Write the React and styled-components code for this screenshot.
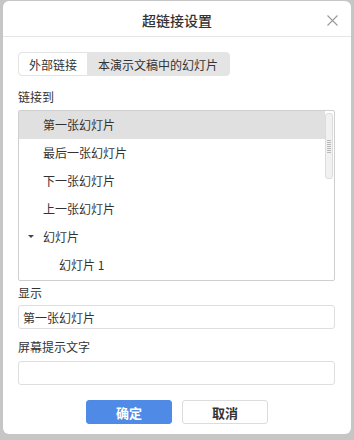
import styled, { createGlobalStyle } from "styled-components"

const GlobalStyle = createGlobalStyle`
  html, body {
    margin: 0;
    padding: 0;
    background: #c6c6c6;
  }
  body {
    font-family: "Noto Sans CJK SC", "Noto Sans", sans-serif;
    color: #333;
  }
`

const rows = [
  { label: "第一张幻灯片", selected: true },
  { label: "最后一张幻灯片" },
  { label: "下一张幻灯片" },
  { label: "上一张幻灯片" },
  { label: "幻灯片", group: true },
  { label: "幻灯片 1", child: true },
]

export default function App() {
  return (
    <>
      <GlobalStyle />
      <Dialog>
        <Header>
          <Title>超链接设置</Title>
          <Close aria-label="关闭">
            <svg width="11" height="11" viewBox="0 0 11 11">
              <path d="M0.5 0.5 L10.5 10.5 M10.5 0.5 L0.5 10.5" stroke="#9a9a9a" strokeWidth="1.1" fill="none" />
            </svg>
          </Close>
        </Header>
        <Body>
          <Tabs>
            <Tab $active>外部链接</Tab>
            <Tab>本演示文稿中的幻灯片</Tab>
          </Tabs>
          <Label $top={12}>链接到</Label>
          <List>
            {rows.map((row) => (
              <Row key={row.label} $selected={row.selected} $child={row.child}>
                {row.group && <Caret />}
                {row.label}
              </Row>
            ))}
            <Scrollbar>
              <Grip />
            </Scrollbar>
          </List>
          <Label $top={3}>显示</Label>
          <Input defaultValue="第一张幻灯片" />
          <Label $top={9}>屏幕提示文字</Label>
          <Input defaultValue="" $gap={2} />
          <Actions>
            <Button $primary>确定</Button>
            <Button>取消</Button>
          </Actions>
        </Body>
      </Dialog>
    </>
  )
}

const Dialog = styled.div`
  width: 348px;
  height: 433px;
  margin: 1px 0 0 3px;
  background: #fff;
  border-radius: 6px;
  overflow: hidden;
`
const Header = styled.div`
  position: relative;
  height: 36px;
  box-sizing: border-box;
  border-bottom: 1px solid #e6e6e6;
  display: flex;
  align-items: center;
  justify-content: center;
`
const Title = styled.div`
  font-size: 14px;
  font-weight: 500;
  color: #333;
  padding-top: 2px;
`
const Close = styled.div`
  position: absolute;
  right: 13px;
  top: 14px;
  width: 11px;
  height: 11px;
  display: flex;
`
const Body = styled.div`
  padding: 15px 16px 0 15px;
  display: flex;
  flex-direction: column;
`
const Tabs = styled.div`
  display: flex;
  align-self: flex-start;
  height: 24px;
  box-sizing: border-box;
  border: 1px solid #e4e4e4;
  border-radius: 4px;
  background: #e4e4e4;
  overflow: hidden;
`
const Tab = styled.div`
  display: flex;
  align-items: center;
  padding: 0 ${(p) => (p.$active ? "10px" : "11px")};
  font-size: 12px;
  color: #333;
  background: ${(p) => (p.$active ? "#fff" : "transparent")};
  border-radius: ${(p) => (p.$active ? "3px 0 0 3px" : "0")};
  width: ${(p) => (p.$active ? "48px" : "auto")};
`
const Label = styled.div`
  margin-top: ${(p) => p.$top}px;
  height: 18px;
  line-height: 18px;
  font-size: 12px;
  color: #333;
  margin-bottom: ${(p) => (p.$top === 12 ? "4px" : "3px")};
`
const List = styled.div`
  position: relative;
  height: 171px;
  box-sizing: border-box;
  border: 1px solid #cfcfcf;
  border-radius: 2px;
  overflow: hidden;
`
const Row = styled.div`
  position: relative;
  height: 28px;
  box-sizing: border-box;
  margin-right: 9px;
  display: flex;
  align-items: center;
  padding-left: ${(p) => (p.$child ? "40px" : "24px")};
  padding-bottom: 2px;
  font-size: 12px;
  color: #333;
  background: ${(p) => (p.$selected ? "#e0e0e0" : "transparent")};
`
const Caret = styled.span`
  position: absolute;
  left: 9px;
  top: 12px;
  width: 0;
  height: 0;
  border-left: 3px solid transparent;
  border-right: 3px solid transparent;
  border-top: 3px solid #444;
`
const Scrollbar = styled.div`
  position: absolute;
  top: 2px;
  right: 1px;
  width: 8px;
  height: 66px;
  box-sizing: border-box;
  background: #f1f1f1;
  border: 1px solid #dcdcdc;
  border-radius: 3px;
  display: flex;
  align-items: center;
  justify-content: center;
`
const Grip = styled.div`
  width: 4px;
  height: 13px;
  background: repeating-linear-gradient(
    to bottom,
    #b8b8b8 0,
    #b8b8b8 1px,
    transparent 1px,
    transparent 2px
  );
`
const Input = styled.input`
  margin-top: ${(p) => (p.$gap ? p.$gap : 0)}px;
  height: 24px;
  box-sizing: border-box;
  border: 1px solid #dedede;
  border-radius: 3px;
  padding: 0 4px;
  font-family: "Noto Sans CJK SC", "Noto Sans", sans-serif;
  font-size: 12px;
  color: #333;
  outline: none;
`
const Actions = styled.div`
  margin-top: 15px;
  display: flex;
  justify-content: center;
  gap: 10px;
  padding-left: 1px;
`
const Button = styled.button`
  width: 86px;
  height: 24px;
  box-sizing: border-box;
  border-radius: 3px;
  border: 1px solid ${(p) => (p.$primary ? "#4e8ae6" : "#dcdcdc")};
  background: ${(p) => (p.$primary ? "#4e8ae6" : "#fff")};
  color: ${(p) => (p.$primary ? "#fff" : "#333")};
  font-family: "Noto Sans CJK SC", "Noto Sans", sans-serif;
  font-size: 13px;
  font-weight: 700;
  padding: 0;
`
